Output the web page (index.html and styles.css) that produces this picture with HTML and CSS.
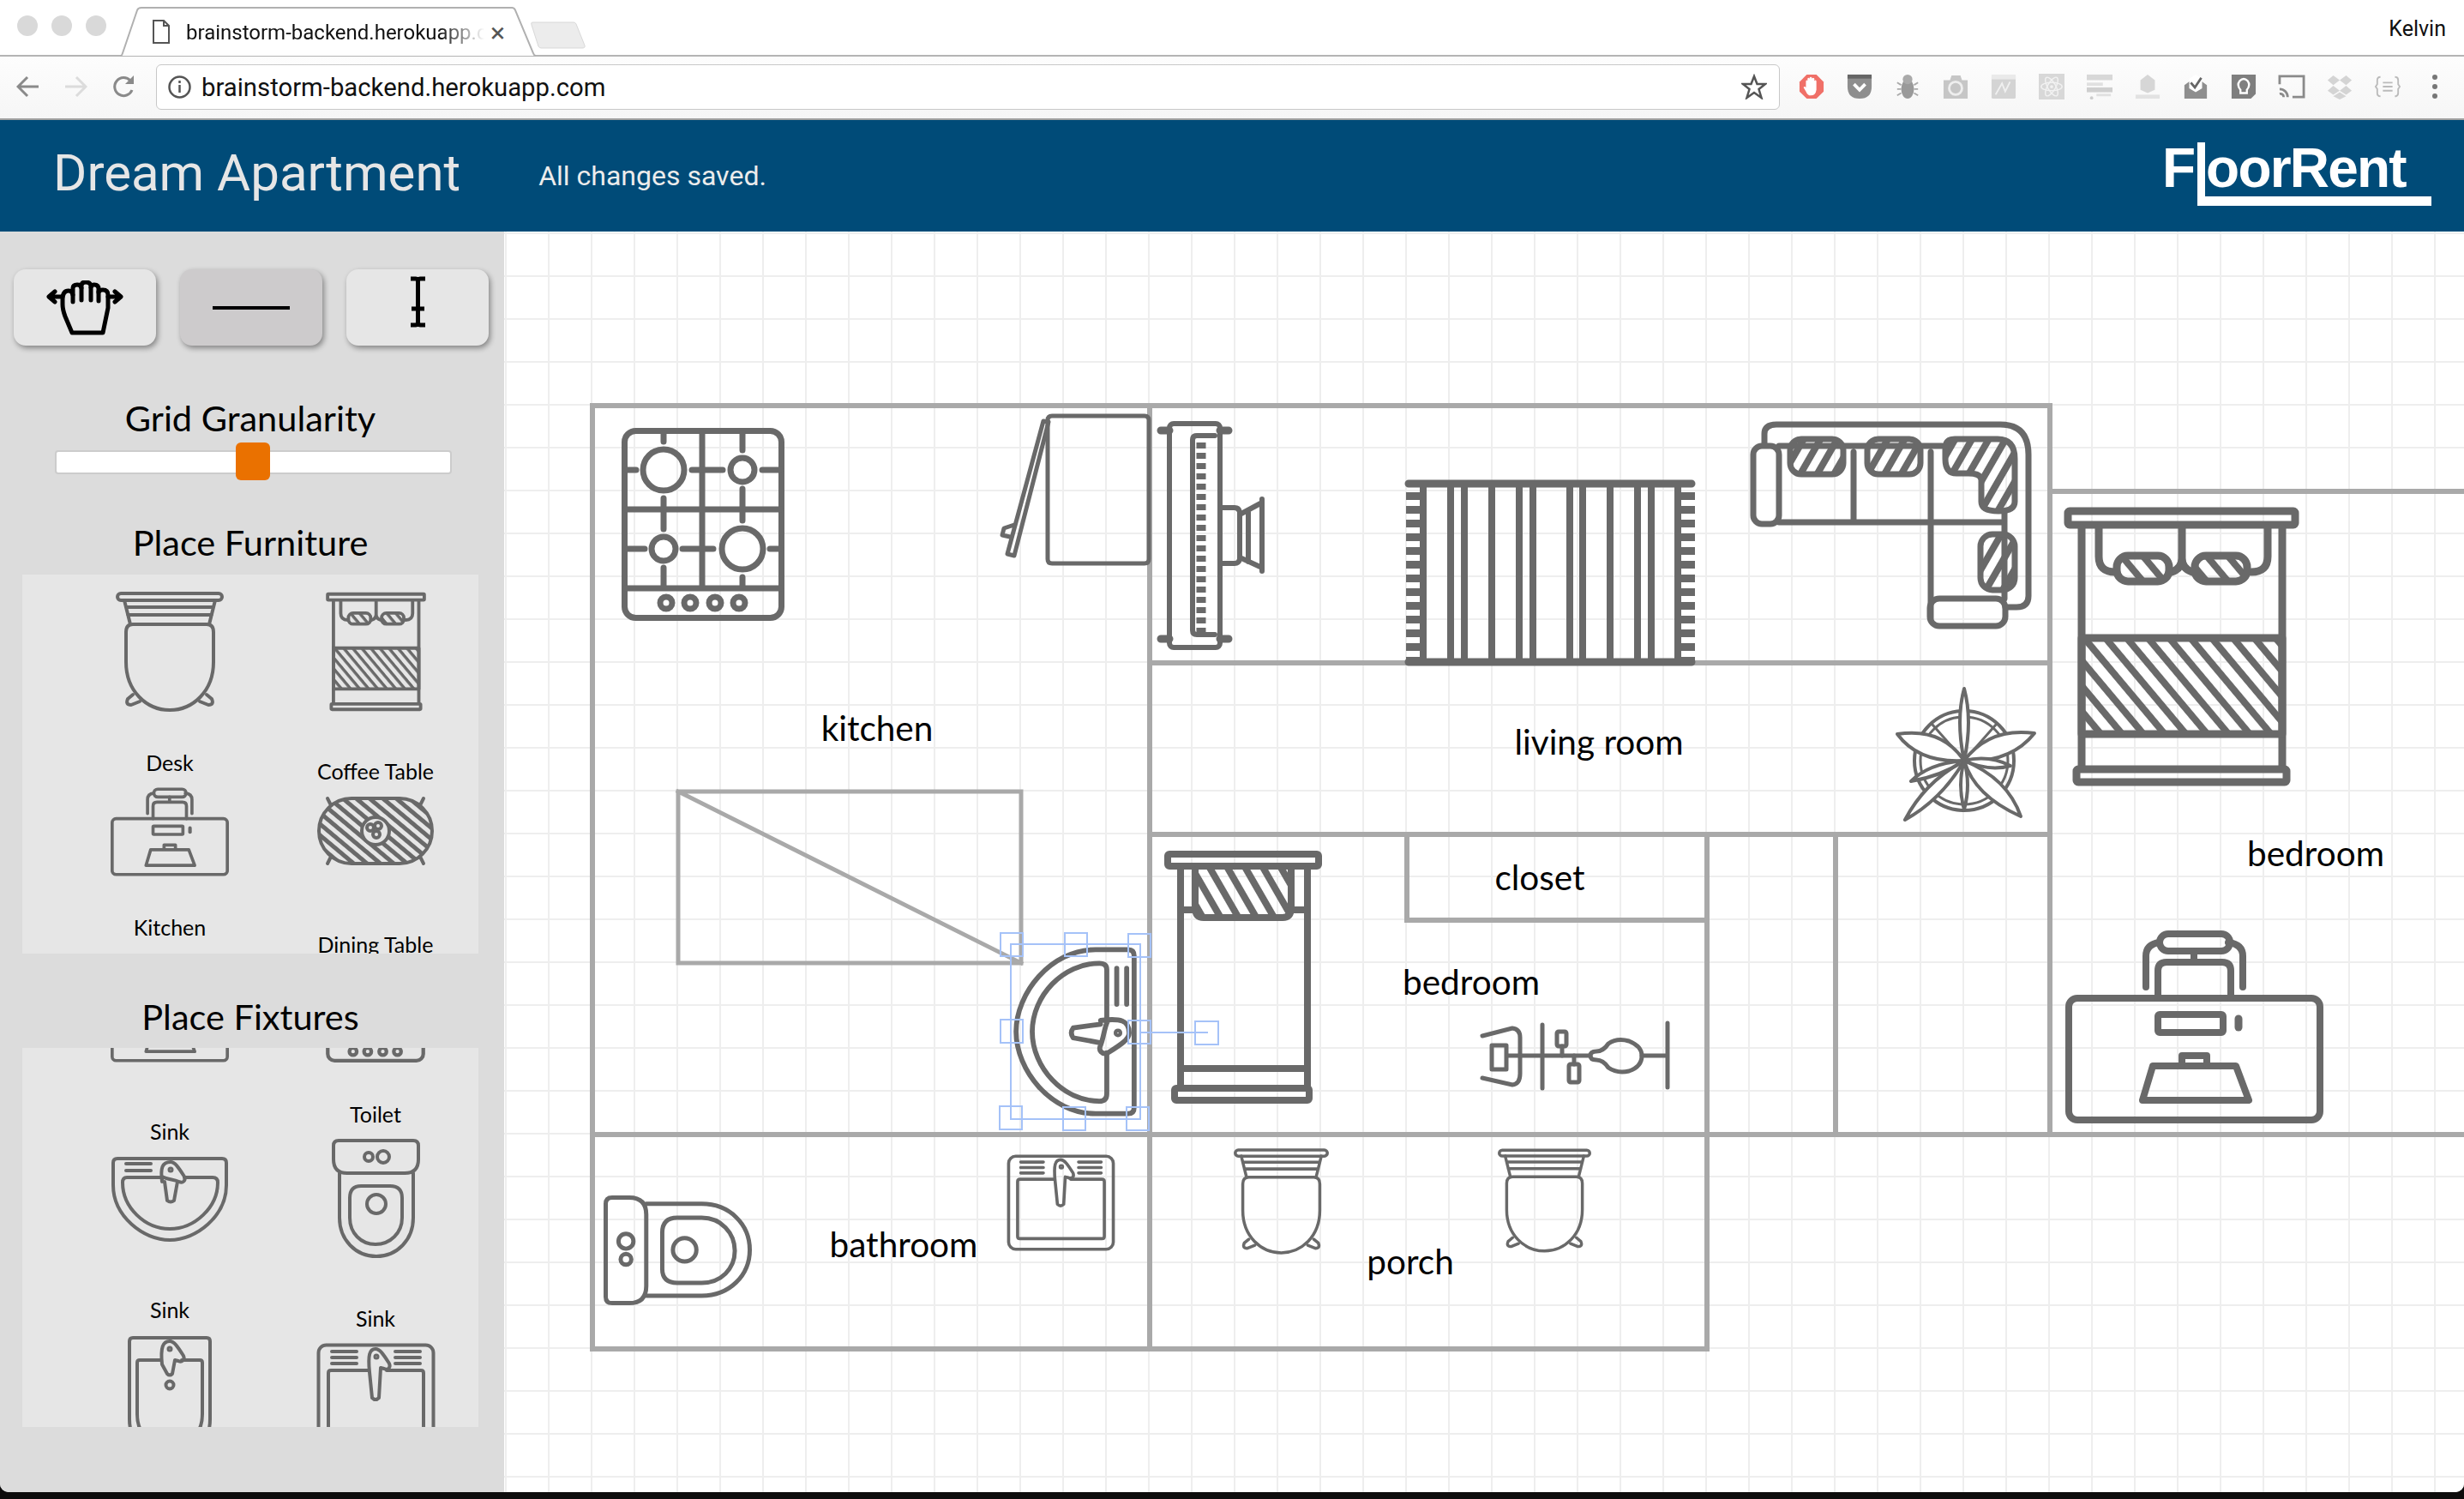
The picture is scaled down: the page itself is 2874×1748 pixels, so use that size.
FILE: index.html
```html
<!DOCTYPE html>
<html lang="en">
<head>
<meta charset="utf-8">
<title>Dream Apartment</title>
<link rel="stylesheet" href="styles.css">
</head>
<body>
<svg class="defs" aria-hidden="true">
  <defs>
    <pattern id="hatch" width="19" height="19" patternUnits="userSpaceOnUse" patternTransform="rotate(50)"><rect width="19" height="8" fill="#696969"/></pattern>
    <pattern id="hatch2" width="18" height="18" patternUnits="userSpaceOnUse" patternTransform="rotate(60)"><rect width="18" height="8" fill="#696969"/></pattern>
    <pattern id="hatch3" width="17" height="17" patternUnits="userSpaceOnUse" patternTransform="rotate(-60)"><rect width="17" height="8" fill="#696969"/></pattern>
    <pattern id="hatch4" width="10" height="10" patternUnits="userSpaceOnUse" patternTransform="rotate(40)"><rect width="10" height="5" fill="#696969"/></pattern>

    <symbol id="s-chair" viewBox="0 0 126 140">
      <g class="ln" stroke-width="4">
        <rect x="2" y="2" width="122" height="8" rx="4"/>
        <path d="M10 10L17 38M116 10L109 38M12 18H114M14 27H112"/>
        <path d="M20 38H106Q114 38 114 47V82C114 116 90 138 63 138C36 138 12 116 12 82V47Q12 38 20 38Z"/>
        <path d="M20 120L14 125Q11 132 18 132L28 128M106 120L112 125Q115 132 108 132L98 128"/>
      </g>
    </symbol>

    <symbol id="s-bed2" viewBox="0 0 275 326">
      <g class="ln" stroke-width="9">
        <rect x="5" y="5" width="265" height="16" rx="2"/>
        <path d="M21 25V303M255 25V303"/>
        <rect x="21" y="153" width="234" height="112" fill="url(#hatch)"/>
        <rect x="15" y="306" width="245" height="15" rx="2"/>
        <path d="M41 25V58Q41 76 60 76M138 25V60Q138 72 126 76M138 60Q138 72 150 76M238 25V58Q238 76 219 76"/>
        <rect x="62" y="57" width="61" height="30" rx="13" fill="url(#hatch)"/>
        <rect x="153" y="57" width="61" height="30" rx="13" fill="url(#hatch)"/>
      </g>
    </symbol>

    <symbol id="s-stove" viewBox="0 0 190 225">
      <g class="ln" stroke-width="7">
        <rect x="3.500" y="3.500" width="183" height="218" rx="13"/>
        <circle cx="49" cy="49" r="24"/><circle cx="141" cy="49" r="14"/>
        <circle cx="49" cy="141" r="14"/><circle cx="141" cy="141" r="24"/>
        <path d="M94 5V186M5 95H185M5 187H185"/>
        <path d="M49 6V16M6 49H17M82 49H118M141 6V26M164 49H185M141 71V108M49 82V118M7 141H27M71 141H107M173 141H185M49 163V184M141 174V184"/>
        <circle cx="52" cy="204" r="7"/><circle cx="80" cy="204" r="7"/><circle cx="109" cy="204" r="7"/><circle cx="137" cy="204" r="7"/>
      </g>
    </symbol>

    <symbol id="s-desk" viewBox="0 0 301 225">
      <g class="ln" stroke-width="8">
        <rect x="4" y="79" width="293" height="142" rx="10"/>
        <path d="M94 66V30Q94 16 110 14M207 66V30Q207 16 190 14"/>
        <rect x="110" y="4" width="82" height="20" rx="10"/>
        <path d="M150 24V33M108 79V47Q108 37 118 37H183Q193 37 193 47V79"/>
        <rect x="108" y="98" width="76" height="21" rx="2"/>
        <path d="M202 103V113" stroke-width="9"/>
        <path d="M102 158H199L214 198H90Z"/>
        <path d="M136 156V146H165V156"/>
      </g>
    </symbol>

    <symbol id="s-table" viewBox="0 0 138 82">
      <g class="ln" stroke-width="4">
        <rect x="3" y="3" width="132" height="76" rx="38" fill="url(#hatch4)"/>
        <path d="M13 3L17 11M125 3L121 11M13 79L17 71M125 79L121 71"/>
        <circle cx="69" cy="41" r="16" class="fillbg"/>
        <circle cx="63" cy="37" r="4"/><circle cx="72" cy="35" r="4"/><circle cx="70" cy="45" r="4"/>
      </g>
    </symbol>

    <symbol id="s-sink" viewBox="0 0 138 101">
      <g class="ln" stroke-width="4">
        <path d="M8 3H130Q135 3 135 8V34C135 70 100 98 69 98C38 98 3 70 3 34V8Q3 3 8 3Z"/>
        <path d="M86 25H119Q125 25 125 31C125 60 98 85 69 85C40 85 14 60 14 31Q14 25 19 25H59"/>
        <path d="M18 9H47M18 17H47"/>
        <path d="M60 30C58 14 60 7 70 7C75 7 79 13 86 24C88 29 84 32 80 30C72 27 65 27 60 24ZM63 30L66 52Q70 55 74 52L78 30"/>
        <circle cx="70" cy="16" r="1.500"/>
      </g>
    </symbol>

    <symbol id="s-sink3" viewBox="0 0 100 140">
      <g class="ln" stroke-width="4">
        <path d="M7 3H93Q97 3 97 7V98C97 120 85 137 50 137C15 137 3 120 3 98V7Q3 3 7 3Z"/>
        <path d="M64 29H85Q88 29 88 32V92C88 112 78 126 50 126C22 126 12 112 12 92V32Q12 29 15 29H39"/>
        <path d="M41 34C39 14 42 7 50 7C55 7 59 13 66 24C68 29 64 32 60 30L56 29L53 45Q50 48 47 45Z"/>
        <circle cx="50" cy="16" r="1.500"/>
        <circle cx="50" cy="58" r="4.500"/>
      </g>
    </symbol>

    <symbol id="s-sink4" viewBox="0 0 139 124">
      <g class="ln" stroke-width="4">
        <rect x="2.500" y="2.500" width="134" height="119" rx="9"/>
        <path d="M60 32H17Q14 32 14 35V105Q14 108 17 108H122Q125 108 125 105V35Q125 32 122 32H82"/>
        <path d="M18 10H47M18 17H47M18 24H47M92 10H121M92 17H121M92 24H121"/>
        <path d="M62 34C60 14 62 7 69 7C74 7 78 13 85 24C87 29 83 32 79 30L75 29L73 64Q69 68 65 64Z"/>
        <circle cx="70" cy="16" r="1.500"/>
      </g>
    </symbol>

    <symbol id="s-toilet" viewBox="0 0 103 139">
      <g class="ln" stroke-width="4">
        <path d="M8 2H95Q101 2 101 8V24Q101 40 85 40H18Q2 40 2 24V8Q2 2 8 2Z"/>
        <circle cx="43" cy="21" r="5"/><circle cx="60" cy="21" r="7"/>
        <path d="M9 40V92C9 118 28 137 52 137C76 137 95 118 95 92V40"/>
        <path d="M34 55H68Q82 55 82 69V92C82 110 68 123 51 123C34 123 21 110 21 92V69Q21 55 34 55Z"/>
        <circle cx="52" cy="76" r="11"/>
      </g>
    </symbol>
  </defs>
</svg>

<div class="window">
  <header class="tabstrip">
    <span class="light"></span><span class="light"></span><span class="light"></span>
    <div class="tab">
      <svg class="tab-bg" viewBox="0 0 485 59" width="485" height="59"><path d="M0 57H1Q2 57 3 54L20 4Q21 1 25 1H457Q460 1 461 4L482 54Q483 57 485 57" fill="#fff" stroke="#b0b0b0" stroke-width="2"/></svg>
      <svg class="fav" viewBox="0 0 20 28" width="20" height="28"><path d="M1 1H13L19 7V27H1ZM13 1V7H19" fill="#fff" stroke="#555" stroke-width="2"/></svg>
      <span class="tab-title">brainstorm-backend.herokuapp.com</span>
      <span class="tab-x">×</span>
    </div>
    <svg class="newtab" viewBox="0 0 64 32" width="64" height="32"><path d="M2 1H50Q52 1 53 3L63 28Q64 31 60 31H12Q10 31 9 29L1 4Q0 1 2 1Z" fill="#ececec" stroke="#d8d8d8"/></svg>
    <span class="user">Kelvin</span>
  </header>

  <nav class="toolbar">
    <svg class="nav" viewBox="0 0 27 26" width="27" height="26"><path d="M26 13H3M13 2L2 13L13 24" fill="none" stroke="#8a8a8a" stroke-width="3"/></svg>
    <svg class="nav" viewBox="0 0 27 26" width="27" height="26"><path d="M1 13H24M14 2L25 13L14 24" fill="none" stroke="#dcdcdc" stroke-width="3"/></svg>
    <svg class="nav" viewBox="0 0 27 28" width="27" height="28"><path d="M23 18A10.500 10.500 0 1 1 21 7" fill="none" stroke="#8a8a8a" stroke-width="3"/><path d="M25 1V11H15Z" fill="#8a8a8a"/></svg>
    <div class="urlbar">
      <svg viewBox="0 0 27 27" width="27" height="27"><circle cx="13.500" cy="13.500" r="12" fill="none" stroke="#555" stroke-width="2.500"/><path d="M13.500 11V20M13.500 6V9" stroke="#555" stroke-width="2.500"/></svg>
      <span class="url">brainstorm-backend.herokuapp.com</span>
      <svg class="star" viewBox="0 0 30 30" width="30" height="30"><path d="M15 3L18.500 12H28L20.500 18L23.500 28L15 22L6.500 28L9.500 18L2 12H11.500Z" fill="none" stroke="#555" stroke-width="2.500"/></svg>
    </div>
    <div class="exts">
      <svg class="ext" viewBox="0 0 32 32"><path d="M10 1H22L31 10V22L22 31H10L1 22V10Z" fill="#f07068"/><path d="M9 15V9Q10 7 11 9V6Q12 4 13.500 6V5Q15 3 16.500 5V6Q18 4 19.500 6V9Q21 7 22 9V20Q21 27 15 27Q11 27 9 22L6 17Q7 15 9 17Z" fill="#fff"/></svg>
      <svg class="ext" viewBox="0 0 32 32"><path d="M1 3H31V16Q31 31 16 31Q1 31 1 16Z" fill="#8e8e8e"/><path d="M1 1H31V6H1Z" fill="#666"/><path d="M9 13L16 20L23 13" fill="none" stroke="#fff" stroke-width="4"/></svg>
      <svg class="ext" viewBox="0 0 32 32"><ellipse cx="16" cy="19" rx="8" ry="12" fill="#9a9a9a"/><ellipse cx="16" cy="7" rx="6" ry="6" fill="#aaa"/><path d="M3 11L8 14M3 19H8M3 27L8 24M29 11L24 14M29 19H24M29 27L24 24" stroke="#aaa" stroke-width="2"/></svg>
      <svg class="ext" viewBox="0 0 32 32"><path d="M1 8H9L11 2H22L24 8H31V31H1Z" fill="#c6c6c6"/><circle cx="16" cy="18" r="8" fill="none" stroke="#eee" stroke-width="3"/></svg>
      <svg class="ext" viewBox="0 0 32 32"><rect x="1" y="1" width="30" height="30" rx="2" fill="#d4d4d4"/><rect x="1" y="1" width="30" height="6" fill="#eaeaea"/><path d="M6 26L14 12L18 22L24 10" fill="none" stroke="#f0f0f0" stroke-width="2"/></svg>
      <svg class="ext" viewBox="0 0 32 32"><rect width="32" height="32" fill="#d8d8d8"/><g fill="none" stroke="#f2f2f2" stroke-width="1.500"><ellipse cx="16" cy="16" rx="13" ry="5"/><ellipse cx="16" cy="16" rx="13" ry="5" transform="rotate(60 16 16)"/><ellipse cx="16" cy="16" rx="13" ry="5" transform="rotate(120 16 16)"/></g><circle cx="16" cy="16" r="2" fill="#f2f2f2"/></svg>
      <svg class="ext" viewBox="0 0 32 32"><rect x="0" y="1" width="32" height="7" fill="#d8d8d8"/><rect x="0" y="11" width="20" height="4" fill="#e0e0e0"/><rect x="0" y="17" width="32" height="6" fill="#cfcfcf"/><rect x="12" y="25" width="18" height="3" fill="#e0e0e0"/><circle cx="6" cy="30" r="2" fill="#ccc"/></svg>
      <svg class="ext" viewBox="0 0 32 32"><path d="M16 1L25 8V20L16 24L7 20V8Z" fill="#d6d6d6"/><rect x="1" y="26" width="30" height="5" fill="#e2e2e2"/></svg>
      <svg class="ext" viewBox="0 0 32 32"><path d="M2 14L16 4L30 14V31H2Z" fill="#8e8e8e"/><path d="M8 6L16 1L24 6V18L16 23L8 18Z" fill="#fff"/><path d="M10 11L15 17L23 5" fill="none" stroke="#666" stroke-width="3"/></svg>
      <svg class="ext" viewBox="0 0 32 32"><path d="M1 1H31V25L25 31H1Z" fill="#7f7f7f"/><path d="M12 20Q7 14 11 9Q16 4 21 9Q25 14 20 20V24H12Z" fill="none" stroke="#fff" stroke-width="2.500"/></svg>
      <svg class="ext" viewBox="0 0 32 32"><path d="M1 13V3H31V29H17" fill="none" stroke="#8a8a8a" stroke-width="3"/><path d="M1 19A10 10 0 0 1 11 29M1 25A4 4 0 0 1 6 29" fill="none" stroke="#8a8a8a" stroke-width="3"/></svg>
      <svg class="ext" viewBox="0 0 32 32"><path d="M8 2L16 8L8 14L1 8ZM24 2L31 8L24 14L16 8ZM8 15L16 21L8 26L1 21ZM24 15L31 21L24 26L16 21ZM16 23L24 28L16 32L8 28Z" fill="#d4d4d4"/></svg>
      <svg class="ext" viewBox="0 0 32 32"><path d="M7 4Q3 4 3 8V13L1 16L3 19V24Q3 28 7 28M25 4Q29 4 29 8V13L31 16L29 19V24Q29 28 25 28M10 11H22M10 16H22M10 21H22" fill="none" stroke="#bbb" stroke-width="2"/></svg>
    </div>
    <div class="dots"><i></i><i></i><i></i></div>
  </nav>

  <section class="appbar">
    <h1 class="title">Dream Apartment</h1>
    <p class="status">All changes saved.</p>
    <div class="logo"><span class="logo-f">F</span><span class="logo-rest">oorRent</span></div>
  </section>

  <div class="workspace">
    <aside class="sidebar">
      <div class="tools">
        <button class="tool">
          <svg viewBox="0 0 90 64" width="90" height="64"><g fill="none" stroke="#000" stroke-width="5" stroke-linecap="round" stroke-linejoin="round"><path d="M19 19H4M10 13L3 19L10 25M72 19H86M80 13L87 19L80 25"/><path d="M19 22Q19 12 26 12Q30 12 31 17V9Q31 5 36 5Q40 5 41 9V6Q41 2 46 2Q51 2 52 6V8Q53 5 56 5Q61 5 61 10V14Q62 11 66 11Q72 11 72 17V32L66 61H30L22 42Q19 34 19 28Z"/><path d="M31 17V25M41 9V23M52 8V23M61 13V24"/></g></svg>
        </button>
        <button class="tool tool-on">
          <svg viewBox="0 0 90 6" width="90" height="6"><path d="M0 3H90" stroke="#000" stroke-width="4"/></svg>
        </button>
        <button class="tool tool-cursor">
          <svg viewBox="0 0 19 60" width="19" height="60"><path d="M1 3H7Q9.500 3 9.500 7Q9.500 3 12 3H18M9.500 7V53M1 57H7Q9.500 57 9.500 53Q9.500 57 12 57H18M2 38H17" fill="none" stroke="#000" stroke-width="5"/></svg>
        </button>
      </div>

      <h2 class="side-head head-grid">Grid Granularity</h2>
      <div class="slider"><span class="thumb"></span></div>

      <h2 class="side-head head-furn">Place Furniture</h2>
      <div class="panel">
        <div class="col">
          <svg class="ic w126 h140 first"><use href="#s-chair"/></svg>
          <span class="lab g43">Desk</span>
          <svg class="ic w138 h104"><use href="#s-desk"/></svg>
          <span class="lab g43">Kitchen</span>
        </div>
        <div class="col">
          <svg class="ic w117 h140 first"><use href="#s-bed2"/></svg>
          <span class="lab g53">Coffee Table</span>
          <svg class="ic w138 h82"><use href="#s-table"/></svg>
          <span class="lab g75">Dining Table</span>
        </div>
      </div>

      <h2 class="side-head head-fix">Place Fixtures</h2>
      <div class="panel">
        <div class="col">
          <svg class="ic w138 h104 up87"><use href="#s-desk"/></svg>
          <span class="lab g64">Sink</span>
          <svg class="ic w138 h101"><use href="#s-sink"/></svg>
          <span class="lab g62">Sink</span>
          <svg class="ic w100 h140 gap14"><use href="#s-sink3"/></svg>
        </div>
        <div class="col">
          <svg class="ic w116 h137 up120"><use href="#s-stove"/></svg>
          <span class="lab g44">Toilet</span>
          <svg class="ic w103 h139"><use href="#s-toilet"/></svg>
          <span class="lab g54">Sink</span>
          <svg class="ic w139 h124"><use href="#s-sink4"/></svg>
        </div>
      </div>
    </aside>

    <main class="canvas">
      <svg class="plan" viewBox="588 270 2286 1470" width="2286" height="1470">
        <g class="wall">
          <path d="M691 473H2391M691 473V1573H1991V973M1341 473V1573M1341 773H2391M1341 973H2391M2391 473V1323M2391 573H2874M691 1323H2874M1641 973V1073H1991M2141 973V1323"/>
          <path d="M791 923H1191V1123H791ZM791 923L1191 1123" stroke-width="5"/>
        </g>

        <use href="#s-stove" x="725" y="499" width="190" height="225"/>

        <g class="ln" stroke-width="5">
          <path d="M1227 485H1335Q1340 485 1340 490V652Q1340 657 1335 657H1227Q1222 657 1222 652V490Q1222 485 1227 485Z"/>
          <path d="M1217 491L1223 492L1183 648L1175 646ZM1183 612L1171 616L1169 624L1178 626"/>
        </g>

        <g class="ln" stroke-width="6">
          <rect x="1364" y="494" width="59" height="261" rx="5"/>
          <path d="M1354 502H1364M1423 502H1433M1354 745H1364M1423 745H1433" stroke-width="9"/>
          <path d="M1417 508H1396Q1391 508 1391 513V735Q1391 740 1396 740H1417"/>
          <path d="M1425 592H1440Q1445 592 1446 597V652Q1445 657 1440 657H1425"/>
          <path d="M1446 600L1472 586V662L1446 650ZM1456 595V655M1472 582V666"/>
          <path d="M1401 516V738" stroke-width="11" stroke-dasharray="7 5" stroke-linecap="butt"/>
        </g>

        <g class="ln" stroke-width="8">
          <path d="M1643 564H1973M1643 772H1973" stroke-width="9"/>
          <path d="M1660 568V770M1957 568V770M1692 568V770M1708 568V770M1740 568V770M1772 568V770M1788 568V770M1831 568V770M1846 568V770M1878 568V770M1910 568V770M1926 568V770" stroke-linecap="butt"/>
          <path d="M1648 574V770M1969 574V770" stroke-width="16" stroke-dasharray="9 7" stroke-linecap="butt"/>
        </g>

        <g class="ln" stroke-width="7">
          <path d="M2058 519V506Q2058 495 2072 495H2333Q2366 495 2366 530V695Q2366 708 2352 708H2339"/>
          <rect x="2045" y="520" width="30" height="91" rx="10"/>
          <path d="M2075 520H2265M2075 609H2338M2162 527V609M2252 527V722M2338 598V698"/>
          <rect x="2251" y="698" width="88" height="32" rx="11"/>
          <rect x="2088" y="512" width="62" height="41" rx="13" fill="url(#hatch3)"/>
          <rect x="2178" y="512" width="62" height="41" rx="13" fill="url(#hatch3)"/>
          <path d="M2280 512H2330Q2350 512 2350 535V585Q2350 596 2331 596Q2311 596 2311 585V560Q2311 552 2296 552H2282Q2269 552 2269 535V523Q2269 512 2280 512Z" fill="url(#hatch3)"/>
          <rect x="2310" y="623" width="40" height="65" rx="14" fill="url(#hatch3)"/>
        </g>

        <g class="ln" stroke-width="4">
          <circle cx="2291" cy="887" r="58"/>
          <circle cx="2291" cy="887" r="51" stroke-width="3"/>
          <path d="M2291 887L2254 845M2291 887L2328 845M2291 887L2255 925M2291 887L2327 925" stroke-width="3"/>
          <g class="leaf">
            <path d="M2291 887Q2281 840 2291 803Q2301 840 2291 887Z"/>
            <path d="M2291 887Q2320 848 2373 855Q2345 890 2291 887Z"/>
            <path d="M2291 887Q2265 848 2213 856Q2238 890 2291 887Z"/>
            <path d="M2291 887Q2245 912 2222 956Q2265 932 2291 887Z"/>
            <path d="M2291 887Q2303 928 2357 952Q2342 908 2291 887Z"/>
            <path d="M2291 887Q2250 890 2229 911Q2265 905 2291 887Z"/>
            <path d="M2291 887Q2320 880 2345 893Q2320 900 2291 887Z"/>
            <path d="M2291 887Q2283 915 2291 944Q2299 915 2291 887Z"/>
          </g>
        </g>

        <use href="#s-bed2" x="2407" y="591" width="275" height="326"/>
        <use href="#s-desk" x="2409" y="1085" width="301" height="225"/>

        <g class="ln" stroke-width="8">
          <rect x="1362" y="996" width="176" height="14" rx="2"/>
          <path d="M1377 1014V1267M1525 1014V1267"/>
          <path d="M1394 1014V1058Q1394 1070 1404 1070H1496Q1506 1070 1506 1058V1014" fill="url(#hatch2)"/>
          <path d="M1377 1061H1394M1506 1061H1525M1377 1246H1525"/>
          <rect x="1370" y="1269" width="157" height="14" rx="2"/>
        </g>

        <g class="ln" stroke-width="5">
          <path d="M1729 1208L1764 1199Q1773 1200 1773 1210V1252Q1773 1264 1764 1265L1729 1257"/>
          <rect x="1740" y="1219" width="17" height="28"/>
          <path d="M1758 1231H1855M1915 1231H1944M1799 1195V1269M1945 1193V1268"/>
          <rect x="1816" y="1203" width="11" height="17" rx="2"/>
          <path d="M1822 1220V1231M1836 1231V1241"/>
          <rect x="1830" y="1241" width="12" height="21" rx="2"/>
          <path d="M1855 1231Q1855 1226 1862 1226Q1870 1226 1876 1217Q1886 1210 1900 1214Q1915 1220 1915 1231Q1915 1244 1900 1249Q1886 1252 1876 1245Q1870 1236 1862 1236Q1855 1236 1855 1231Z"/>
        </g>

        <use href="#s-sink4" x="1174" y="1346" width="127" height="113"/>

        <g transform="translate(704 1523) rotate(-90)">
          <use href="#s-toilet" x="0" y="0" width="130" height="173"/>
        </g>

        <use href="#s-chair" x="1439" y="1339" width="111" height="124"/>
        <use href="#s-chair" x="1747" y="1339" width="109" height="122"/>

        <g transform="translate(1328 1103) rotate(90)">
          <use href="#s-sink" x="0" y="0" width="200" height="148"/>
        </g>

        <g class="sel">
          <rect x="1179" y="1101" width="151" height="204"/>
          <rect x="1167" y="1088" width="26" height="27"/><rect x="1242" y="1088" width="26" height="27"/><rect x="1316" y="1089" width="26" height="27"/>
          <rect x="1167" y="1189" width="26" height="27"/><rect x="1316" y="1190" width="26" height="27"/>
          <rect x="1166" y="1290" width="26" height="27"/><rect x="1240" y="1291" width="26" height="27"/><rect x="1314" y="1291" width="26" height="27"/>
          <path d="M1330 1204H1409"/>
          <rect x="1394" y="1191" width="27" height="27"/>
        </g>

        <text class="rm" x="1023" y="864">kitchen</text>
        <text class="rm" x="1865" y="880">living room</text>
        <text class="rm" x="1796" y="1038">closet</text>
        <text class="rm" x="1716" y="1160">bedroom</text>
        <text class="rm" x="2701" y="1010">bedroom</text>
        <text class="rm" x="1054" y="1466">bathroom</text>
        <text class="rm" x="1645" y="1486">porch</text>
      </svg>
    </main>
  </div>
</div>
</body>
</html>
```

FILE: styles.css
```css
* { box-sizing: border-box; }
html, body { margin: 0; height: 100%; }
body {
  background: #0d0c0c;
  overflow: hidden;
  font-family: Roboto, "Liberation Sans", sans-serif;
}
.defs { position: absolute; width: 0; height: 0; }
.window {
  height: 1740px;
  display: flex;
  flex-direction: column;
  background: #fff;
  border-radius: 0 0 10px 10px;
  overflow: hidden;
}

/* browser tab strip */
.tabstrip {
  height: 66px;
  flex: none;
  display: flex;
  align-items: flex-start;
  padding-left: 20px;
  background: #fff;
  border-bottom: 2px solid #b4b4b4;
}
.light {
  width: 24px;
  height: 24px;
  margin: 18px 16px 0 0;
  border-radius: 50%;
  background: #d9d9d9;
}
.tab {
  position: relative;
  width: 485px;
  height: 66px;
  display: flex;
  align-items: center;
  padding: 10px 0 0 38px;
}
.tab-bg { position: absolute; left: 0; top: 8px; }
.fav { position: relative; flex: none; margin-top: -2px; }
.tab-title {
  position: relative;
  width: 348px;
  margin-left: 19px;
  font-size: 24px;
  white-space: nowrap;
  overflow: hidden;
  color: #111;
  -webkit-mask-image: linear-gradient(90deg, #000 85%, transparent 100%);
  mask-image: linear-gradient(90deg, #000 85%, transparent 100%);
}
.tab-x { position: relative; margin-left: 7px; font-size: 32px; color: #555; line-height: 1; }
.newtab { flex: none; margin: 25px 0 0 -6px; }
.user { margin: 19px 21px 0 auto; font-size: 25px; color: #111; }

/* browser toolbar */
.toolbar {
  height: 74px;
  flex: none;
  display: flex;
  align-items: center;
  padding: 0 31px 2px 19px;
  background: linear-gradient(#fdfdfd, #f6f6f6);
  border-bottom: 2px solid #a0a0a0;
}
.nav { flex: none; margin-right: 29px; }
.nav:nth-of-type(3) { margin-right: 24px; }
.urlbar {
  flex: 1;
  height: 53px;
  display: flex;
  align-items: center;
  gap: 12px;
  padding: 0 14px 0 13px;
  background: #fff;
  border: 1px solid #c8c8c8;
  border-radius: 6px;
}
.url { padding-top: 2px; font-size: 29.300px; color: #111; }
.star { margin-left: auto; }
.exts { display: flex; gap: 24px; margin-left: 21px; }
.ext { width: 32px; height: 30px; flex: none; }
.dots { display: flex; flex-direction: column; gap: 5px; margin-left: 36px; }
.dots i { width: 6px; height: 6px; border-radius: 50%; background: #777; }

/* app header */
.appbar {
  height: 130px;
  flex: none;
  display: flex;
  align-items: center;
  padding-left: 62px;
  background: #004b78;
}
.title { margin: 0 0 6px; font-size: 60px; font-weight: 400; color: #e6e6e6; line-height: 1; }
.status { margin: 0 0 0 91px; font-size: 32px; color: #ececec; }
.logo {
  position: relative;
  margin: 0 38px 4px auto;
  width: 309px;
  height: 74px;
  font-family: "Liberation Sans", sans-serif;
  font-weight: 700;
  font-size: 64px;
  line-height: 60px;
  color: #fff;
  white-space: nowrap;
}
.logo::after {
  content: "";
  position: absolute;
  left: 36px;
  top: 0;
  width: 273px;
  height: 74px;
  box-sizing: border-box;
  border-left: 9px solid #fff;
  border-bottom: 11px solid #fff;
}
.logo-f { margin-left: -5px; }
.logo-rest { letter-spacing: -1.800px; margin-left: 12px; }

/* workspace */
.workspace { flex: 1; display: flex; min-height: 0; }
.sidebar {
  width: 588px;
  flex: none;
  padding: 44px 0 0 16px;
  background: #dcdcdc;
  font-family: Lato, "Noto Sans", sans-serif;
}
.tools { display: flex; gap: 28px; }
.tool {
  width: 166px;
  height: 89px;
  display: flex;
  align-items: center;
  justify-content: center;
  padding: 0;
  border: 0;
  border-radius: 14px;
  background: #e6e6e6;
  box-shadow: 2px 3px 6px rgba(0, 0, 0, .4);
}
.tool-on { background: #cdcbcc; }
.tool-cursor { padding-bottom: 14px; }
.side-head {
  width: 532px;
  margin: 0 0 0 10px;
  font-size: 41.500px;
  line-height: 48px;
  font-weight: 400;
  text-align: center;
  color: #000;
}
.head-grid { margin-top: 60px; }
.head-furn { margin-top: 55px; margin-bottom: 14px; }
.head-fix { margin-top: 49px; margin-bottom: 13px; }
.slider {
  position: relative;
  width: 463px;
  height: 28px;
  margin: 14px 0 0 48px;
  background: #fff;
  border: 2px solid #ccc;
  border-radius: 4px;
}
.thumb {
  position: absolute;
  left: 209px;
  top: -11px;
  width: 40px;
  height: 44px;
  border-radius: 6px;
  background: #ea7100;
}
.panel {
  width: 532px;
  height: 442px;
  margin-left: 10px;
  display: flex;
  padding-left: 52px;
  overflow: hidden;
  background: #e6e6e6;
}
.col { width: 240px; flex: none; display: flex; flex-direction: column; align-items: center; }
.ic { flex: none; margin-top: 13px; display: block; }
.first { margin-top: 20px; }
.up87 { margin-top: -87px; }
.up120 { margin-top: -120px; }
.gap14 { margin-top: 14px; }
.w100 { width: 100px; } .w103 { width: 103px; } .w116 { width: 116px; } .w117 { width: 117px; }
.w126 { width: 126px; } .w138 { width: 138px; } .w139 { width: 139px; }
.h82 { height: 82px; } .h101 { height: 101px; } .h104 { height: 104px; } .h124 { height: 124px; }
.h137 { height: 137px; } .h139 { height: 139px; } .h140 { height: 140px; }
.lab { flex: none; font-size: 25px; line-height: 32px; color: #000; white-space: nowrap; }
.g43 { margin-top: 43px; } .g44 { margin-top: 44px; } .g53 { margin-top: 53px; } .g54 { margin-top: 54px; }
.g62 { margin-top: 62px; } .g64 { margin-top: 64px; } .g75 { margin-top: 75px; }

/* floor plan canvas */
.canvas {
  flex: 1;
  min-width: 0;
  background-color: #fff;
  background-image:
    linear-gradient(#eee 2px, transparent 2px),
    linear-gradient(90deg, #eee 2px, transparent 2px);
  background-size: 50px 50px;
  background-position: 0 1px, 1px 0;
}
.plan { display: block; }
.wall { fill: none; stroke: #a9a9a9; stroke-width: 6; stroke-linecap: square; }
.ln { fill: none; stroke: #696969; stroke-linecap: round; stroke-linejoin: round; }
.fillbg { fill: #e6e6e6; }
.leaf path { fill: #fff; }
.sel { fill: none; stroke: #a5c2f8; stroke-width: 2; }
.rm { font-family: Lato, "Noto Sans", sans-serif; font-size: 40.500px; fill: #000; text-anchor: middle; }
```
